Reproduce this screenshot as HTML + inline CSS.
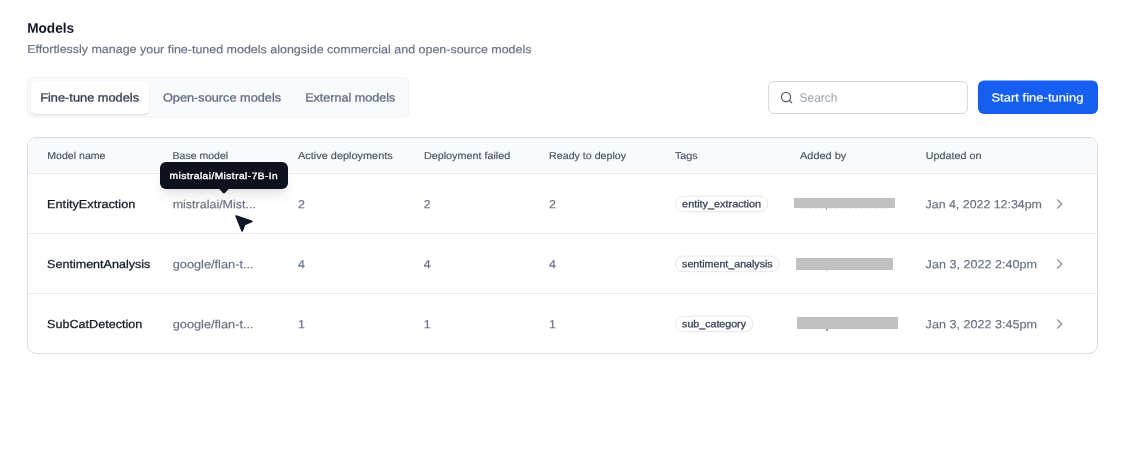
<!DOCTYPE html>
<html lang="en">
<head>
<meta charset="utf-8">
<title>Models</title>
<style>
*{box-sizing:border-box;margin:0;padding:0}
html,body{width:1128px;height:463px;background:#fff;overflow:hidden}
body{font-family:"Liberation Sans",Arial,sans-serif;color:#101828}
#root{position:absolute;left:0;top:0;width:1128px;height:463px;will-change:transform}
.t{position:absolute;white-space:nowrap;line-height:1;font-weight:400;transform-origin:0 0}
.t>span{display:inline-block;transform-origin:0 0}
.t.r{-webkit-text-stroke:0.16px currentColor}
.t.bt{-webkit-text-stroke:0.18px currentColor}
.t.m{-webkit-text-stroke:0.25px currentColor}
.t.h{-webkit-text-stroke:0.15px currentColor}
.t.g{-webkit-text-stroke:0.28px currentColor}
.t.tp{-webkit-text-stroke:0.35px currentColor}
.t.s{-webkit-text-stroke:0.32px currentColor}
.t.B{font-weight:700}
.t.b{-webkit-text-stroke:0.45px currentColor}
.box{position:absolute}
.tabs{left:27px;top:77px;width:382px;height:41px;background:#f9fafb;border:1px solid #f2f4f7;border-radius:6px}
.tabon{left:31px;top:81px;width:118px;height:33px;background:#fff;border-radius:5px;box-shadow:0 1px 2px rgba(16,24,40,.08),0 1px 1.5px rgba(16,24,40,.05)}
.search{left:768px;top:81px;width:200px;height:33px;border:1px solid #d3d7df;border-radius:6px;background:#fff}
.btn{left:978px;top:80.5px;width:120px;height:33.5px;border-radius:6px;background:#155eef}
.table{left:27px;top:137px;width:1071px;height:217px;border:1px solid #d6dae1;border-radius:9px;background:#fff;overflow:hidden}
.thead{left:0;top:0;width:100%;height:36px;background:#f9fafb;border-bottom:1px solid #eaecf0}
.hr{left:0;width:100%;height:1px;background:#eaecf0}
.tag{height:16.5px;border:1px solid #eaecf0;border-radius:9px;background:#fff}
.bar{background:#c1c1c1}
.tip{left:159.7px;top:162.4px;width:128.8px;height:26.3px;background:#0c111d;border-radius:6px;box-shadow:0 8px 12px -2px rgba(16,24,40,.10),0 3px 5px -2px rgba(16,24,40,.05)}
svg{position:absolute;overflow:visible}
</style>
</head>
<body>
<div id="root">
<svg style="left:0;top:0" width="500" height="130"><rect x="27.6" y="77.8" width="381" height="39.2" rx="4" fill="#f9fafb" stroke="#f0f2f5" stroke-width="1"/></svg>
<div class="box tabon"></div>
<div class="box search"></div>
<svg style="left:780px;top:91px" width="14" height="14" viewBox="0 0 14 14" fill="none" stroke="#4e5b70" stroke-width="1.25" stroke-linecap="round"><circle cx="6" cy="6" r="4.6"/><path d="M9.4 9.4L11.7 11.7"/></svg>
<svg style="left:0;top:0" width="1128" height="130"><rect x="978" y="80.45" width="120" height="33.5" rx="6" fill="#155eef"/></svg>
<div class="box table">
  <div class="box thead"></div>
  <div class="box hr" style="top:95px"></div>
  <div class="box hr" style="top:155px"></div>
</div>
<div class="box" style="left:37px;top:137px;width:1051px;height:1px;background:#dde0e7"></div>
<div class="box" style="left:35px;top:138px;width:1055px;height:1px;background:#edeff3"></div>
<svg style="left:0;top:0" width="1128" height="463" fill="#fff" stroke="#e6e8ed" stroke-width="1"><rect x="675.4" y="196.1" width="92.4" height="15.6" rx="7.8"/><rect x="675.4" y="256.1" width="103.7" height="15.6" rx="7.8"/><rect x="675.4" y="316.1" width="77.4" height="15.6" rx="7.8"/></svg>
<div class="box bar" style="left:794px;top:198px;width:101px;height:10px"></div>
<div class="box bar" style="left:796px;top:258px;width:97px;height:12px"></div>
<div class="box bar" style="left:797px;top:317px;width:101px;height:12px"></div>
<svg style="left:1055px;top:198px" width="10" height="13" viewBox="0 0 10 13" fill="none" stroke="#8791a4" stroke-width="1.25" stroke-linecap="round" stroke-linejoin="round"><path d="M2.5 1.8l4.3 4.2-4.3 4.2"/></svg>
<svg style="left:1055px;top:258px" width="10" height="13" viewBox="0 0 10 13" fill="none" stroke="#8791a4" stroke-width="1.25" stroke-linecap="round" stroke-linejoin="round"><path d="M2.5 1.8l4.3 4.2-4.3 4.2"/></svg>
<svg style="left:1055px;top:318px" width="10" height="13" viewBox="0 0 10 13" fill="none" stroke="#8791a4" stroke-width="1.25" stroke-linecap="round" stroke-linejoin="round"><path d="M2.5 1.8l4.3 4.2-4.3 4.2"/></svg>
<div class="box tip"></div>
<svg style="left:218px;top:188px" width="12" height="7" viewBox="0 0 12 7"><path d="M0.4 0h11.2L6.9 5a1.3 1.3 0 0 1-1.8 0z" fill="#0c111d"/></svg>
<svg style="left:233px;top:212px" width="22" height="22" viewBox="0 0 22 22"><path d="M3.25 4.1L18.7 9.4L11.6 12.5L9.2 18.8Z" fill="#0f1626" stroke="#0f1626" stroke-width="1.8" stroke-linejoin="round"/></svg>
<div class="box" style="left:826.4px;top:208px;width:1px;height:2.4px;background:#a3abba"></div>
<div class="box" style="left:800px;top:208px;width:90px;height:1px;background:repeating-linear-gradient(90deg,rgba(102,112,133,.14) 0 2px,rgba(102,112,133,.04) 2px 5px)"></div>
<div class="box" style="left:826.4px;top:270px;width:1.2px;height:1px;background:#c3c8d2"></div>
<div class="box" style="left:826.4px;top:329px;width:1.2px;height:1.6px;background:#8f98aa"></div>

<span class="t B" id="title" style="left:27px;top:21px;font-size:13.75px;transform:translate(0.2px,0.69px) scaleX(0.99) rotate(.03deg);color:#101828">Models</span>
<span class="t r" id="sub" style="left:27px;top:44px;font-size:11.5px;transform:translate(0.3px,0.07px) scaleX(1.0839) rotate(.03deg);color:#667085">Effortlessly manage your fine-tuned models alongside commercial and open-source models</span>
<span class="t s" id="tab1" style="left:40px;top:91px;font-size:11.75px;transform:translate(0.2px,0.47px) scaleX(1.0892) rotate(.03deg);color:#344054">Fine-tune models</span>
<span class="t s" id="tab2" style="left:162px;top:91px;font-size:11.75px;transform:translate(0.9px,0.47px) scaleX(1.0836) rotate(.03deg);color:#667085">Open-source models</span>
<span class="t s" id="tab3" style="left:305px;top:91px;font-size:11.75px;transform:translate(0.2px,0.48px) scaleX(1.0694) rotate(.03deg);color:#667085">External models</span>
<span class="t r0" id="search" style="left:799px;top:91px;font-size:12.25px;transform:translate(0.6px,0.79px) scaleX(0.9761) rotate(.03deg);color:#98a2b3">Search</span>
<span class="t bt" id="btn" style="left:991px;top:91px;font-size:11.75px;letter-spacing:0.04px;transform:translate(0.4px,0.53px) scaleX(1.1) rotate(.03deg);color:#fff">Start fine-tuning</span>
<span class="t h" id="h1" style="left:47px;top:150px;font-size:10px;transform:translate(0.2px,0.93px) scaleX(1.0594) rotate(.03deg);color:#475467">Model name</span>
<span class="t h" id="h2" style="left:172px;top:150px;font-size:10px;transform:translate(0.6px,0.94px) scaleX(1.0509) rotate(.03deg);color:#475467">Base model</span>
<span class="t h" id="h3" style="left:298px;top:150px;font-size:10px;transform:translate(0.1px,0.93px) scaleX(1.0909) rotate(.03deg);color:#475467">Active deployments</span>
<span class="t h" id="h4" style="left:423px;top:150px;font-size:10px;transform:translate(0.9px,0.93px) scaleX(1.0781) rotate(.03deg);color:#475467">Deployment failed</span>
<span class="t h" id="h5" style="left:549px;top:150px;font-size:10px;transform:translate(0.1px,0.93px) scaleX(1.0653) rotate(.03deg);color:#475467">Ready to deploy</span>
<span class="t h" id="h6" style="left:674px;top:150px;font-size:10px;transform:translate(0.9px,0.94px) scaleX(1.0746) rotate(.03deg);color:#475467">Tags</span>
<span class="t h" id="h7" style="left:800px;top:150px;font-size:10px;transform:translate(0.0px,0.94px) scaleX(1.0955) rotate(.03deg);color:#475467">Added by</span>
<span class="t h" id="h8" style="left:925px;top:150px;font-size:10px;transform:translate(0.7px,0.94px) scaleX(1.077) rotate(.03deg);color:#475467">Updated on</span>
<span class="t tp" id="tip" style="left:169px;top:171px;font-size:9.25px;letter-spacing:0.408px;transform:translate(0.5px,0.87px) scaleX(1.1) rotate(.03deg);color:#fff">mistralai/Mistral-7B-In</span>
<span class="t m" id="r1name" style="left:47px;top:199px;font-size:11.5px;letter-spacing:0.017px;transform:translate(0.1px,0.08px) scaleX(1.1) rotate(.03deg);color:#101828">EntityExtraction</span>
<span class="t r" id="r1base" style="left:172px;top:198px;font-size:11.75px;transform:translate(0.7px,0.18px) scaleX(1.062) rotate(.03deg);color:#667085">mistralai/Mist...</span>
<span class="t r" id="r1n0" style="left:298px;top:198px;font-size:11.75px;transform:translate(0.1px,0.2px) scaleX(1.0539) rotate(.03deg);color:#667085">2</span>
<span class="t r" id="r1n1" style="left:423px;top:198px;font-size:11.75px;transform:translate(0.7px,0.2px) scaleX(1.0539) rotate(.03deg);color:#667085">2</span>
<span class="t r" id="r1n2" style="left:549px;top:198px;font-size:11.75px;transform:translate(0.1px,0.2px) scaleX(1.0539) rotate(.03deg);color:#667085">2</span>
<span class="t g" id="r1tag" style="left:682px;top:199px;font-size:10px;transform:translate(0.1px,0.33px) scaleX(1.0847) rotate(.03deg);color:#344054">entity_extraction</span>
<span class="t r" id="r1date" style="left:925px;top:198px;font-size:11.75px;transform:translate(0.6px,0.17px) scaleX(1.0534) rotate(.03deg);color:#667085">Jan 4, 2022 12:34pm</span>
<span class="t m" id="r2name" style="left:47px;top:259px;font-size:11.5px;transform:translate(0.1px,0.07px) scaleX(1.0908) rotate(.03deg);color:#101828">SentimentAnalysis</span>
<span class="t r" id="r2base" style="left:172px;top:258px;font-size:11.75px;transform:translate(0.7px,0.18px) scaleX(1.0864) rotate(.03deg);color:#667085">google/flan-t...</span>
<span class="t r" id="r2n0" style="left:298px;top:258px;font-size:11.75px;transform:translate(0.1px,0.2px) scaleX(1.0539) rotate(.03deg);color:#667085">4</span>
<span class="t r" id="r2n1" style="left:423px;top:258px;font-size:11.75px;transform:translate(0.7px,0.2px) scaleX(1.0539) rotate(.03deg);color:#667085">4</span>
<span class="t r" id="r2n2" style="left:549px;top:258px;font-size:11.75px;transform:translate(0.1px,0.2px) scaleX(1.0539) rotate(.03deg);color:#667085">4</span>
<span class="t g" id="r2tag" style="left:682px;top:259px;font-size:10px;transform:translate(0.1px,0.33px) scaleX(1.0653) rotate(.03deg);color:#344054">sentiment_analysis</span>
<span class="t r" id="r2date" style="left:925px;top:258px;font-size:11.75px;transform:translate(0.6px,0.17px) scaleX(1.0715) rotate(.03deg);color:#667085">Jan 3, 2022 2:40pm</span>
<span class="t m" id="r3name" style="left:47px;top:319px;font-size:11.5px;transform:translate(0.1px,0.08px) scaleX(1.0948) rotate(.03deg);color:#101828">SubCatDetection</span>
<span class="t r" id="r3base" style="left:172px;top:318px;font-size:11.75px;transform:translate(0.7px,0.18px) scaleX(1.0864) rotate(.03deg);color:#667085">google/flan-t...</span>
<span class="t r" id="r3n0" style="left:298px;top:318px;font-size:11.75px;transform:translate(0.1px,0.2px) scaleX(1.0539) rotate(.03deg);color:#667085">1</span>
<span class="t r" id="r3n1" style="left:423px;top:318px;font-size:11.75px;transform:translate(0.7px,0.2px) scaleX(1.0539) rotate(.03deg);color:#667085">1</span>
<span class="t r" id="r3n2" style="left:549px;top:318px;font-size:11.75px;transform:translate(0.1px,0.2px) scaleX(1.0539) rotate(.03deg);color:#667085">1</span>
<span class="t g" id="r3tag" style="left:682px;top:319px;font-size:10px;transform:translate(0.1px,0.33px) scaleX(1.0642) rotate(.03deg);color:#344054">sub_category</span>
<span class="t r" id="r3date" style="left:925px;top:318px;font-size:11.75px;transform:translate(0.6px,0.17px) scaleX(1.0715) rotate(.03deg);color:#667085">Jan 3, 2022 3:45pm</span>
</div>
</body>
</html>
